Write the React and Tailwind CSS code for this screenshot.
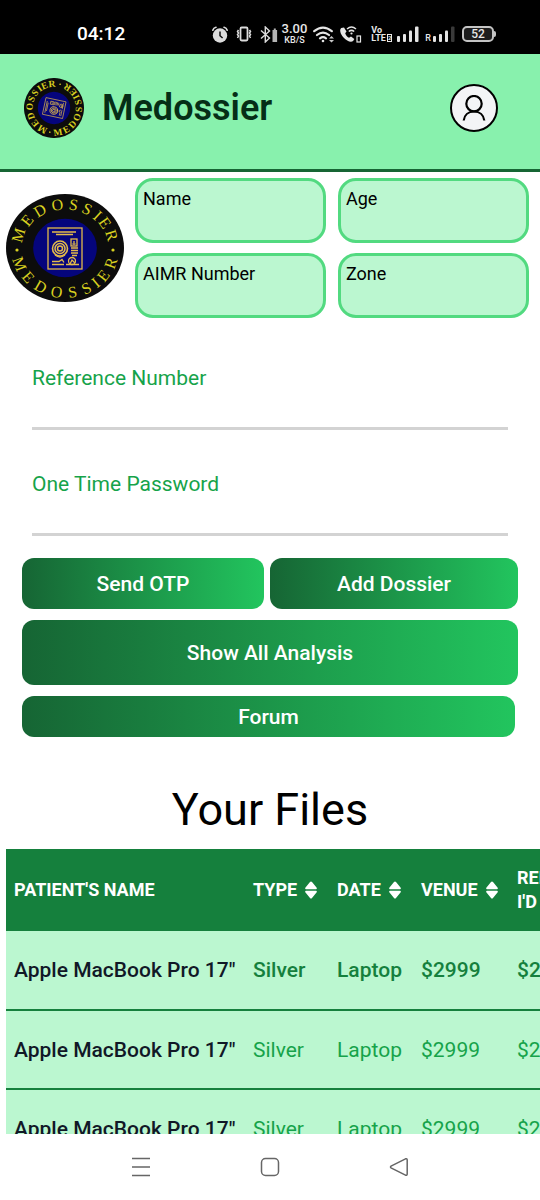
import React from "react";

const WORD = "MEDOSSIER";
const TOP_ANGLES = [-163, -141, -121, -99, -80, -63, -48, -35, -17];
const BOTTOM_ANGLES = [159, 139, 120, 100, 81, 64, 51, 38, 20];

function Seal({ rx, ry, fontSize, bold, rotate = 0, className }) {
  const letters = (angles, a, b, flip) =>
    WORD.split("").map((ch, i) => {
      const t = (angles[i] * Math.PI) / 180;
      const x = a * Math.cos(t);
      const y = b * Math.sin(t);
      const turn = flip ? angles[i] - 90 : angles[i] + 90;
      return (
        <text
          key={i}
          textAnchor="middle"
          transform={`translate(${x} ${y}) rotate(${turn})`}
        >
          {ch}
        </text>
      );
    });
  const cap = fontSize * 0.66;
  return (
    <svg
      viewBox={`${-rx} ${-ry} ${rx * 2} ${ry * 2}`}
      className={className}
      role="img"
      aria-label="Medossier seal"
    >
      <g transform={`rotate(${rotate})`}>
        <ellipse rx={rx} ry={ry} fill="#0c0c0c" />
        <ellipse rx={rx * 0.54} ry={ry * 0.54} fill="#05057c" />
        <g
          fill="#d8d020"
          fontFamily="'Liberation Serif', serif"
          fontSize={fontSize}
          fontWeight={bold ? 700 : 400}
        >
          {letters(TOP_ANGLES, rx - 5 - cap, ry - 5 - cap, false)}
          {letters(BOTTOM_ANGLES, rx - 5, ry - 4, true)}
          <circle cx={-rx + 11} cy="2" r="1.6" />
          <circle cx={rx - 11} cy="2" r="1.6" />
        </g>
        <g fill="none" stroke="#e3bb4a" strokeWidth="1.3">
          <rect x="-17" y="-20" width="34" height="41" />
          <path d="M-13-16h24M-9-13.500h17" />
          <circle cx="-5" cy="0.500" r="7.500" strokeWidth="1.600" />
          <circle cx="-5" cy="0.500" r="5" strokeWidth="1.500" />
          <circle cx="-5" cy="0.500" r="2.500" strokeWidth="1.500" />
          <path d="M-10 7q5 4 10 0" />
          <rect x="6" y="-9" width="6" height="7" />
          <path d="M7.500-4h3M9-7v2M6 0h7M6 2.500h7M6 5h7M7 7.500h5" />
          <path d="M-13 13.500h7l3-2 2 3M-13 16.500h12M1 16.500h13" />
          <circle cx="7" cy="13" r="3.500" />
          <path d="M5 16l2-4 3 3" />
        </g>
      </g>
    </svg>
  );
}

function SignalBars({ dimLast }) {
  return (
    <svg viewBox="0 0 22 16" className="h-4 w-[22px] shrink-0" fill="#e5e5e5" aria-hidden="true">
      <rect x="0" y="10" width="3" height="6" rx="1" />
      <rect x="6" y="8" width="3" height="8" rx="1" />
      <rect x="12" y="4.500" width="3" height="11.500" rx="1" />
      <rect x="18" y="0.500" width="3.500" height="15.500" rx="1" fill={dimLast ? "#3a3a3a" : "#e5e5e5"} />
    </svg>
  );
}

function StatusBar() {
  return (
    <div className="flex h-[54px] shrink-0 items-center bg-black pr-11 pl-[77px] pt-[14px] text-[#e8e8e8]">
      <span className="text-[19px] leading-6 font-medium text-white">04:12</span>
      <div className="ml-auto flex items-center">
        <svg viewBox="0 0 16 17" className="mr-2 h-[17px] w-4" aria-hidden="true">
          <circle cx="8" cy="9.500" r="7.200" fill="#dcdcdc" />
          <path d="M.8 4.200Q1.500 1.800 4 1.200M15.200 4.200Q14.500 1.800 12 1.200" stroke="#dcdcdc" strokeWidth="1.600" fill="none" strokeLinecap="round" />
          <path d="M8 5.500v4.200l2.600 2.300" stroke="#111" strokeWidth="1.500" fill="none" />
        </svg>
        <svg viewBox="0 0 16 16" className="mr-2 size-4" fill="none" stroke="#dcdcdc" strokeWidth="1.500" aria-hidden="true">
          <rect x="4.500" y="1.500" width="7" height="13" rx="1.200" strokeWidth="1.800" />
          <path d="M2.500 4l-1 1.500 1 1.500-1 1.500 1 1.500-1 2M13.500 4l1 1.500-1 1.500 1 1.500-1 1.500 1 2" />
        </svg>
        <svg viewBox="0 0 18 17" className="mr-1 h-[17px] w-[18px]" aria-hidden="true">
          <path d="M1 4.500l8.500 7.500-4.200 4V1l4.200 4L1 12.500" stroke="#dcdcdc" strokeWidth="1.400" fill="none" />
          <path d="M12.500 4h1.300V2.500h2V4h1.300v12h-4.600z" fill="#b5b5b5" />
        </svg>
        <span className="mr-[6px] flex flex-col items-center font-medium">
          <span className="text-[13px] leading-3">3.00</span>
          <span className="text-[9px] leading-[11px]">KB/S</span>
        </span>
        <svg viewBox="0 0 22 17" className="mr-1 h-[17px] w-[22px]" fill="none" stroke="#e5e5e5" strokeWidth="2.200" strokeLinecap="round" aria-hidden="true">
          <path d="M1.200 5.200Q10-2 18.800 5.200M4 9q6-4.800 12 0M7 12.300q3-2.300 6 0" />
          <circle cx="10" cy="15" r="1.300" fill="#e5e5e5" stroke="none" />
          <path d="M16 12.500l2.500-2.500 2.500 2.500zM16 14l2.500 2.500L21 14z" fill="#c8c8c8" stroke="none" />
        </svg>
        <svg viewBox="0 0 23 17" className="mr-[9px] h-[17px] w-[23px]" fill="none" stroke="#e5e5e5" aria-hidden="true">
          <path d="M2.200 2C.4 3.500 1 7.500 4.500 11.500s8 5.200 9.800 3.200l1-1.700-3.300-2.500-2 1.300c-2-1-3-2.500-3.800-4.500L7.500 5.500 5 1.500z" fill="#e5e5e5" stroke="none" />
          <path d="M8 3q4.500-4 9 0M9.800 5.500q2.700-2.300 5.400 0" strokeWidth="1.500" />
          <circle cx="12.500" cy="7.500" r="1.100" fill="#e5e5e5" stroke="none" />
          <rect x="18" y="10" width="3.500" height="6" strokeWidth="1.200" />
        </svg>
        <span className="mr-[5px] flex flex-col font-bold">
          <span className="text-[9px] leading-2">Vo</span>
          <span className="flex items-center text-[9px] leading-2">
            LTE
            <span className="ml-px border border-current text-[6px] leading-[6px]">2</span>
          </span>
        </span>
        <SignalBars />
        <span className="mt-2 mr-[2px] ml-[6px] text-[9px] leading-[10px] font-medium">R</span>
        <SignalBars dimLast />
        <span className="ml-[7px] flex h-4 w-8 items-center justify-center rounded-[5px] border-2 border-[#c4c4c4] bg-[#1d1d1d] text-[12px] leading-3 font-medium">
          52
        </span>
        <span className="h-[6px] w-[2px] rounded-r bg-[#c4c4c4]" />
      </div>
    </div>
  );
}

function Header() {
  return (
    <header className="flex h-[118px] shrink-0 items-center border-b-[3px] border-[#166534] bg-[#88f1ad] pr-[42px] pb-2 pl-6">
      <Seal rx={60} ry={60} fontSize={19} bold rotate={-78} className="size-[60px]" />
      <h1 className="ml-[18px] text-[36px] leading-[42px] font-semibold text-[#052e16]">Medossier</h1>
      <button
        type="button"
        aria-label="Account"
        className="ml-auto flex size-12 items-center justify-center rounded-full border-2 border-black bg-[#f3f4f6]"
      >
        <svg viewBox="0 0 24 26" className="h-[26px] w-6" fill="none" stroke="#000" strokeWidth="2.200" aria-hidden="true">
          <circle cx="12" cy="8.700" r="7.700" />
          <path d="M1.700 25.500c.6-5.400 4.600-9 10.300-9s9.700 3.600 10.300 9" />
        </svg>
      </button>
    </header>
  );
}

function Profile() {
  return (
    <section className="flex items-center gap-[11px] pt-[6px] pr-[11px] pl-[6px]">
      <Seal rx={59} ry={54} fontSize={16} className="h-[108px] w-[118px] shrink-0" />
      <div className="grid flex-1 grid-cols-2 gap-x-3 gap-y-[10px]">
        {["Name", "Age", "AIMR Number", "Zone"].map((name) => (
          <div
            key={name}
            className="h-[65px] rounded-[18px] border-[3px] border-[#52da80] bg-[#bbf7d0] px-[5px] pt-1 text-[18px] leading-[27px] text-black"
          >
            {name}
          </div>
        ))}
      </div>
    </section>
  );
}

function Field({ id, label, type }) {
  return (
    <div className="flex flex-col">
      <label htmlFor={id} className="text-[21px] leading-[30px] text-[#16a34a]">
        {label}
      </label>
      <input
        id={id}
        type={type}
        className="h-[37px] w-full border-b-[3px] border-[#d3d3d3] bg-transparent text-[21px] outline-none"
      />
    </div>
  );
}

function ActionButton({ className, children }) {
  return (
    <button
      type="button"
      className={`rounded-xl bg-[linear-gradient(to_right,#166534,#22c55e)] text-center text-[21px] leading-[30px] font-medium text-white ${className}`}
    >
      {children}
    </button>
  );
}

function SortIcon() {
  return (
    <svg viewBox="0 0 12 18" className="h-[18px] w-3" fill="currentColor" aria-hidden="true">
      <path d="M6 .5q.6 0 1 .5l4.700 5.800q.5 1.400-.7 1.400H1Q-.2 8.200.3 6.800L5 1q.4-.5 1-.5zM6 17.500q.6 0 1-.5l4.700-5.800q.5-1.400-.7-1.400H1q-1.200 0-.7 1.400L5 17q.4.5 1 .5z" />
    </svg>
  );
}

function FilesTable() {
  return (
    <div className="overflow-x-auto pl-[6px] [scrollbar-width:none]">
      <table className="w-[640px] table-fixed border-collapse text-left">
        <colgroup>
          <col className="w-[239px]" />
          <col className="w-[84px]" />
          <col className="w-[84px]" />
          <col className="w-[96px]" />
          <col />
        </colgroup>
        <thead className="bg-[#15803d] text-[18px] leading-6 text-white uppercase">
          <tr className="h-[82px]">
            <th className="px-2 font-bold">Patient's name</th>
            {["Type", "Date", "Venue"].map((name) => (
              <th key={name} className="pl-2 font-bold">
                <button type="button" className="flex items-center gap-2 uppercase">
                  {name}
                  <SortIcon />
                </button>
              </th>
            ))}
            <th className="px-2 font-bold">
              Reference
              <br />
              I'd
            </th>
          </tr>
        </thead>
        <tbody className="bg-[#bbf7d0] text-[21px] leading-[30px] whitespace-nowrap">
          {[0, 1, 2].map((row) => (
            <tr
              key={row}
              className={
                row === 0
                  ? "h-[79px] border-b-2 border-[#15803d] font-medium text-[#15803d]"
                  : "h-[79px] border-b-2 border-[#15803d] text-[#16a34a]"
              }
            >
              <th scope="row" className="pl-2 font-medium text-[#111827]">
                Apple MacBook Pro 17"
              </th>
              <td className="pl-2">Silver</td>
              <td className="pl-2">Laptop</td>
              <td className="pl-2">$2999</td>
              <td className="pl-2">$2999</td>
            </tr>
          ))}
        </tbody>
      </table>
    </div>
  );
}

function SystemNav() {
  return (
    <nav className="flex h-[66px] shrink-0 items-center justify-center gap-[109px] bg-white text-[#666]">
      <button type="button" aria-label="Recent apps">
        <svg viewBox="0 0 20 20" className="size-5" fill="none" stroke="currentColor" strokeWidth="1.500">
          <path d="M1 1.500h18M1 10h18M1 18.500h18" />
        </svg>
      </button>
      <button type="button" aria-label="Home">
        <svg viewBox="0 0 20 20" className="size-5" fill="none" stroke="currentColor" strokeWidth="1.500">
          <rect x="1.500" y="1.500" width="17" height="17" rx="4" />
        </svg>
      </button>
      <button type="button" aria-label="Back">
        <svg viewBox="0 0 20 20" className="size-5" fill="none" stroke="currentColor" strokeWidth="1.500" strokeLinejoin="round">
          <path d="M2 9.200L16.500 1.800q1.700-.6 1.700 1.200v14q0 1.800-1.700 1.200L2 10.800q-1-.8 0-1.600z" />
        </svg>
      </button>
    </nav>
  );
}

export default function App() {
  return (
    <div className="flex h-screen flex-col bg-white font-['Roboto',sans-serif]">
      <StatusBar />
      <Header />
      <main className="min-h-0 flex-1 overflow-y-auto [scrollbar-width:none]">
        <Profile />
        <form className="flex flex-col gap-[39px] px-8 pt-[45px]">
          <Field id="reference" label="Reference Number" type="text" />
          <Field id="otp" label="One Time Password" type="password" />
        </form>
        <div className="flex flex-col gap-[11px] px-[22px] pt-[22px]">
          <div className="flex gap-[6px]">
            <ActionButton className="h-[51px] flex-[242]">Send OTP</ActionButton>
            <ActionButton className="h-[51px] flex-[248]">Add Dossier</ActionButton>
          </div>
          <ActionButton className="h-[65px]">Show All Analysis</ActionButton>
          <ActionButton className="mr-[3px] h-[41px]">Forum</ActionButton>
        </div>
        <h2 className="pt-[46px] pb-3 text-center text-[45px] leading-[54px] text-black">Your Files</h2>
        <FilesTable />
      </main>
      <SystemNav />
    </div>
  );
}
